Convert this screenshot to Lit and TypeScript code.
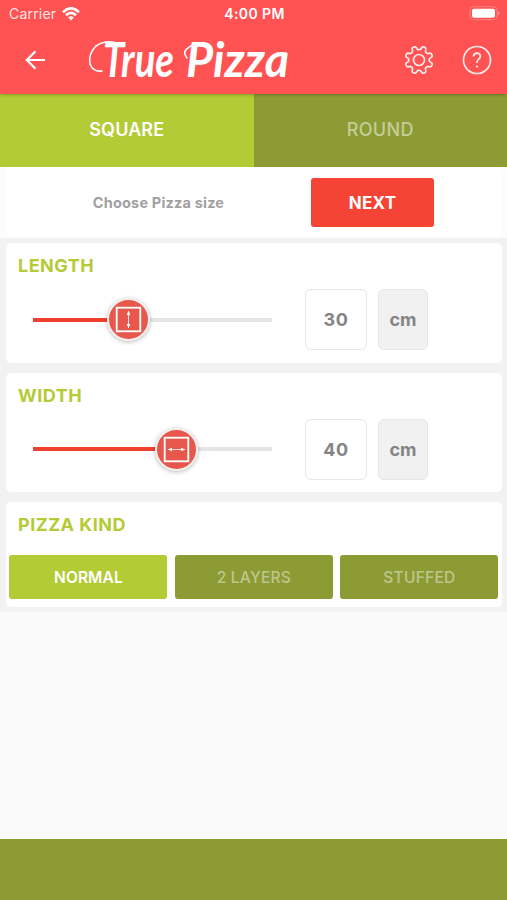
import { LitElement, html, css, svg } from "lit";
import { customElement, property, state } from "lit/decorators.js";
import { classMap } from "lit/directives/class-map.js";

@customElement("size-card")
class SizeCard extends LitElement {
  @property() label = "";
  @property({ type: Number }) value = 0;
  @property({ type: Number }) percent = 0;
  @property({ type: Boolean }) vertical = false;

  static styles = css`
    :host { display: block; height: 120px; background: #fff; border-radius: 5px; }
    .title { height: 46px; padding-left: 12px; font-size: 18px; line-height: 46px; font-weight: 700; letter-spacing: 0.5px; color: #b3cb35; }
    .row { display: flex; align-items: center; height: 61px; padding-left: 27px; }
    .slider { position: relative; width: 239px; height: 4px; margin-right: 33px; background: #e5e5e5; }
    .fill { height: 4px; background: #f0402f; }
    .knob { position: absolute; top: 50%; width: 39px; height: 39px; margin: -21.5px 0 0 -21.5px; border: 2px solid #f3efee; border-radius: 50%; background: #e8574b; box-shadow: 0 1px 4px rgba(0, 0, 0, 0.28); }
    .knob svg { display: block; width: 39px; height: 39px; }
    .turn { transform: rotate(90deg); }
    .value, .unit { box-sizing: border-box; height: 61px; line-height: 60px; text-align: center; font-size: 18px; font-weight: 700; letter-spacing: 0.6px; color: #848484; border: 1px solid #e6e6e6; border-radius: 6px; }
    .value { width: 62px; margin-right: 11px; }
    .unit { width: 50px; background: #f1f1f1; letter-spacing: 0; }
  `;

  render() {
    return html`
      <div class="title">${this.label}</div>
      <div class="row">
        <div class="slider">
          <div class="fill" style="width:${this.percent}%"></div>
          <div class="knob" style="left:${this.percent}%">
            <svg class=${classMap({ turn: this.vertical })} viewBox="0 0 38 38" fill="none" stroke="#fff">
              <rect x="7.5" y="7.5" width="23" height="23" stroke-width="1.8" />
              <path d="M11 19h16" stroke-width="1" opacity="0.8" />
              <path d="M10.500 19l4-1.800v3.600zM27.500 19l-4-1.800v3.600z" fill="#fff" stroke="none" />
            </svg>
          </div>
        </div>
        <div class="value">${this.value}</div>
        <div class="unit">cm</div>
      </div>
    `;
  }
}

const gearOutline = (() => {
  const points: string[] = [];
  const steps = 128;
  for (let i = 0; i < steps; i++) {
    const angle = (i / steps) * Math.PI * 2;
    const wave = Math.tanh(2.2 * Math.cos(8 * angle + Math.PI)) / Math.tanh(2.2);
    const r = 12.1 + 1.8 * wave;
    points.push((15 + r * Math.cos(angle)).toFixed(2) + " " + (15 + r * Math.sin(angle)).toFixed(2));
  }
  return "M" + points.join("L") + "Z";
})();

const gear = svg`<path d=${gearOutline} /><circle cx="15" cy="15" r="5.500" />`;

@customElement("app-root")
class AppRoot extends LitElement {
  @state() private shape = "SQUARE";
  @state() private kind = "NORMAL";

  static styles = css`
    :host { display: flex; flex-direction: column; width: 507px; height: 900px; background: #fafafa; font-family: Inter, "Liberation Sans", sans-serif; overflow: hidden; }
    svg { display: block; flex: none; }
    header { position: relative; z-index: 1; height: 94px; background: #ff5252; color: #fff; box-shadow: 0 1px 3px rgba(0, 0, 0, 0.26); }
    .status { display: grid; grid-template-columns: 1fr auto 1fr; align-items: center; height: 27px; padding: 0 7px 0 9px; font-size: 14px; }
    .carrier { display: flex; align-items: center; gap: 6px; color: #ffe3e3; letter-spacing: 0.2px; }
    .time { font-weight: 600; font-size: 14px; letter-spacing: 0.4px; }
    .battery { justify-self: end; }
    .bar { display: flex; align-items: center; height: 65px; padding: 0 14px 0 23px; }
    .logo { margin-left: 39px; margin-right: 113px; }
    .logo text { font-family: Lato, sans-serif; font-style: italic; font-weight: 700; }
    .help { margin-left: 28px; }
    .tabs { display: grid; grid-template-columns: 1fr 1fr; height: 73px; }
    .tab { display: flex; align-items: center; justify-content: center; padding-bottom: 3px; background: #8c9b33; color: rgba(255, 255, 255, 0.5); font-size: 18px; font-weight: 500; letter-spacing: 0.3px; }
    .option { display: flex; align-items: center; justify-content: center; height: 43px; padding-top: 1px; border-radius: 3px; background: #8c9b33; color: rgba(255, 255, 255, 0.45); font-size: 15.5px; font-weight: 500; letter-spacing: 0.25px; }
    .on { background: #b3cb35; color: #fff; }
    .tab.on, .option.on { font-weight: 600; letter-spacing: 0.1px; }
    .prompt { height: 71px; padding: 0 6px; box-sizing: border-box; background: #fcfcfc; }
    .prompt-inner { display: flex; align-items: center; height: 70px; background: #fff; border-radius: 5px; }
    .hint { width: 305px; text-align: center; font-size: 14.5px; font-weight: 700; letter-spacing: 0.18px; color: #a0a0a0; }
    .next { display: flex; align-items: center; justify-content: center; width: 123px; height: 48px; padding-top: 1px; border-radius: 3px; background: #f54336; color: #fff; font-size: 17px; font-weight: 700; letter-spacing: 0.3px; }
    .panel { display: flex; flex-direction: column; gap: 9.6px; height: 364px; padding: 5px 5px 5px 6px; background: #f2f2f2; box-sizing: content-box; }
    .kinds { height: 105px; border-radius: 5px; background: #fff; }
    .kind-title { height: 53px; padding-left: 12px; font-size: 18px; line-height: 46px; font-weight: 700; letter-spacing: 0.5px; color: #b3cb35; box-sizing: border-box; }
    .options { display: grid; grid-template-columns: repeat(3, 158px); gap: 7.5px; padding-left: 3.400px; }
    footer { height: 61px; margin-top: auto; background: #8c9b33; }
  `;

  render() {
    return html`
      <header>
        <div class="status">
          <div class="carrier">
            Carrier
            <svg width="18" height="14" viewBox="0 0 18 14" fill="none" stroke="#fff" stroke-width="2.600">
              <path d="M1 5.200Q9 -2.600 17 5.200" /><path d="M4 8.300Q9 3.600 14 8.300" />
              <path d="M6.200 10.500Q9 8 11.800 10.500L9 13.500Z" fill="#fff" stroke="none" />
            </svg>
          </div>
          <div class="time">4:00 PM</div>
          <svg class="battery" width="31" height="15" viewBox="0 0 31 15">
            <rect x="1" y="0.700" width="27" height="13" rx="4" fill="none" stroke="#ff8080" />
            <rect x="3" y="2.700" width="23" height="9" rx="2" fill="#fff" />
            <path d="M29 5Q32 7.200 29 9.400Z" fill="#ff9696" />
          </svg>
        </div>
        <div class="bar">
          <svg width="25" height="24" viewBox="0 0 25 24" fill="none" stroke="#fff" stroke-width="2.200">
            <path d="M22 12H4M12.500 3.300L3.800 12L12.500 20.700" />
          </svg>
          <svg class="logo" width="204" height="64" viewBox="0 0 204 64" fill="#fff">
            <path d="M28 14.500Q18 12 9 18Q1 26 3 36Q6 44 15 43" fill="none" stroke="#fff" stroke-width="1.600" stroke-linecap="round" />
            <path d="M100 30Q95 24 101 20Q106 15 116 14.500" fill="none" stroke="#fff" stroke-width="1.600" stroke-linecap="round" />
            <text x="16" y="49" font-size="47" textLength="71" lengthAdjust="spacingAndGlyphs">True</text>
            <text x="99" y="49" font-size="47" textLength="103" lengthAdjust="spacingAndGlyphs">Pizza</text>
          </svg>
          <svg width="30" height="30" viewBox="0 0 30 30" fill="none" stroke="#ffe9e9" stroke-width="1.700" stroke-linejoin="round">${gear}</svg>
          <svg class="help" width="30" height="30" viewBox="0 0 30 30" fill="none" stroke="#ffe9e9" stroke-width="1.700">
            <circle cx="15" cy="15" r="13.500" />
            <path d="M11.500 11.500Q11.700 8.200 15 8.200Q18.500 8.400 18.300 11.600Q18 13.500 16.200 14.600Q15 15.500 15 18" />
            <circle cx="15" cy="21.600" r="1.100" fill="#ffe9e9" stroke="none" />
          </svg>
        </div>
      </header>
      <div class="tabs">
        ${["SQUARE", "ROUND"].map(
          (s) => html`<div class=${classMap({ tab: true, on: s === this.shape })} @click=${() => (this.shape = s)}>${s}</div>`
        )}
      </div>
      <div class="prompt">
        <div class="prompt-inner">
          <div class="hint">Choose Pizza size</div>
          <div class="next">NEXT</div>
        </div>
      </div>
      <div class="panel">
        <size-card label="LENGTH" .value=${30} .percent=${40} vertical></size-card>
        <size-card label="WIDTH" .value=${40} .percent=${60}></size-card>
        <div class="kinds">
          <div class="kind-title">PIZZA KIND</div>
          <div class="options">
            ${["NORMAL", "2 LAYERS", "STUFFED"].map(
              (k) => html`<div class=${classMap({ option: true, on: k === this.kind })} @click=${() => (this.kind = k)}>${k}</div>`
            )}
          </div>
        </div>
      </div>
      <footer></footer>
    `;
  }
}
